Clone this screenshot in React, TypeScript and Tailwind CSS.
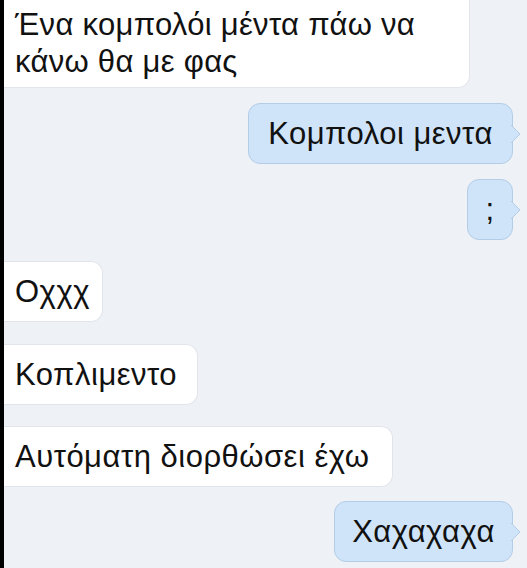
import React from 'react';

type Msg = {
  id: number;
  text: string;
  mine: boolean;
  gap: string;
  width: string;
};

// chat thread, cropped screenshot
const messages: Msg[] = [
  { id: 2, text: 'Κομπολοι μεντα', mine: true, gap: 'mt-[15px]', width: 'w-[265px]' },
  { id: 3, text: ';', mine: true, gap: 'mt-[15px]', width: 'w-[46px]' },
  { id: 4, text: 'Οχχχ', mine: false, gap: 'mt-[21px]', width: 'w-[99px]' },
  { id: 5, text: 'Κοπλιμεντο', mine: false, gap: 'mt-[22px]', width: 'w-[194px]' },
  { id: 6, text: 'Αυτόματη διορθώσει έχω', mine: false, gap: 'mt-[21px]', width: 'w-[389px]' },
  { id: 7, text: 'Χαχαχαχα', mine: true, gap: 'mt-[14px]', width: 'w-[179px]' },
];

const Tail = () => (
  <svg
    className="absolute right-[-9px] top-1/2 -translate-y-1/2"
    width="10"
    height="20"
    viewBox="0 0 10 20"
  >
    <path d="M0 1 L9 10 L0 19 Z" fill="#cfe4f9" />
    <path d="M0 1 L9 10 L0 19" fill="none" stroke="#b3cde6" strokeWidth="1" />
  </svg>
);

const Bubble = ({ msg }: { msg: Msg }) => {
  if (msg.mine) {
    return (
      <div className={`flex justify-end pr-[14px] ${msg.gap}`}>
        <div className={`relative h-[61px] flex items-center justify-center rounded-[12px] bg-[#cfe4f9] border border-[#b3cde6] ${msg.width}`}>
          <span className="text-[31px] tracking-[0.5px] leading-none text-[#111111] whitespace-nowrap">{msg.text}</span>
          <Tail />
        </div>
      </div>
    );
  }
  return (
    <div className={`flex justify-start ${msg.gap}`}>
      <div className={`h-[61px] flex items-center pl-[11px] rounded-r-[12px] bg-white border border-l-0 border-[#e1e4ea] ${msg.width}`}>
        <span className="text-[31px] tracking-[0.5px] leading-none text-[#111111] whitespace-nowrap">{msg.text}</span>
      </div>
    </div>
  );
};

export default function App() {
  return (
    <div
      className="w-[527px] h-[568px] overflow-hidden flex bg-[#eef1f6]"
      style={{ fontFamily: '"Liberation Sans", Arial, sans-serif' }}
    >
      <div className="w-[4px] shrink-0 bg-black" />
      <div className="flex-1 flex flex-col">
        <div className="flex justify-start">
          <div className="w-[466px] pt-[6px] pb-[7px] pl-[11px] rounded-br-[12px] bg-white border-b border-r border-[#e1e4ea]">
            <p className="text-[31px] tracking-[0.3px] leading-[37px] text-[#111111]">
              Ένα κομπολόι μέντα πάω να
              <br />
              κάνω θα με φας
            </p>
          </div>
        </div>
        {messages.map((m) => (
          <Bubble key={m.id} msg={m} />
        ))}
      </div>
    </div>
  );
}
